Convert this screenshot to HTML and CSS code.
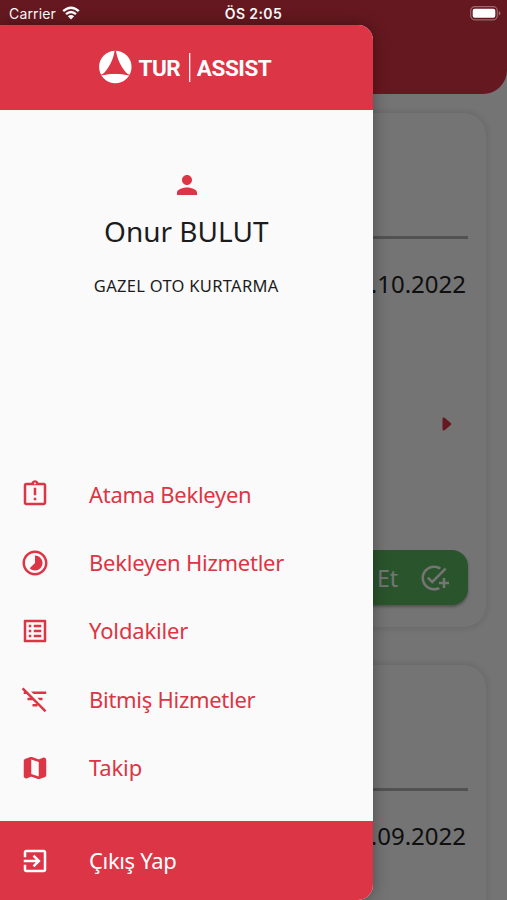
FILE: index.html
```html
<!DOCTYPE html>
<html lang="tr">
<head>
    <title>Tur Assist</title>
    <meta charset="UTF-8">
    <meta name="viewport" content="width=device-width, initial-scale=1">
    <link rel="stylesheet" href="styles.css">
</head>
<body>
<div class="screen">
    <!--Page behind the menu-->
    <div class="page">
	<div class="topbar"></div>
	<div class="card">
	    <div class="line"></div>
	    <div class="date">11.10.2022</div>
	    <div class="more">
		<svg width="10" height="14" viewBox="0 0 10 14"><path d="M.5 1.8Q.5.2 2 .5L3.2 1.2 8.8 6.1Q9.8 7 8.8 7.9L3.2 12.8 2 13.5Q.5 13.8.5 12.2z"/></svg>
	    </div>
	    <div class="accept">
		<span class="label">Kabul Et</span>
		<svg width="30" height="30" viewBox="0 0 24 24"><path d="M22 5.18 10.59 16.6l-4.24-4.24 1.41-1.41 2.83 2.83 10-10L22 5.18zM12 20c-4.41 0-8-3.59-8-8s3.59-8 8-8c1.57 0 3.04.46 4.28 1.25l1.45-1.45C16.1 2.67 14.13 2 12 2 6.48 2 2 6.48 2 12s4.48 10 10 10c1.73 0 3.36-.44 4.78-1.22l-1.5-1.5c-1 .46-2.11.72-3.28.72zm7-5h-3v2h3v3h2v-3h3v-2h-3v-3h-2v3z"/></svg>
	    </div>
	</div>
	<div class="card">
	    <div class="line"></div>
	    <div class="date">28.09.2022</div>
	</div>
    </div>
    <div class="shade"></div>

    <!--Status bar-->
    <div class="status">
	<div class="carrier">
	    <span>Carrier</span>
	    <svg width="18" height="14" viewBox="0 0 18 14"><path d="M1.2 5.2Q9-1.8 16.8 5.2M4 8.2Q9 3.8 14 8.2" fill="none" stroke="#fff" stroke-width="2.4"/><path d="M5.8 10.2Q9 7.6 12.2 10.2L9 13.6z" fill="#fff"/></svg>
	</div>
	<div class="clock">ÖS 2:05</div>
	<div class="battery">
	    <svg width="31" height="15" viewBox="0 0 31 15"><rect x=".7" y=".7" width="26.6" height="13.1" rx="4" fill="none" stroke="#fff" stroke-opacity=".35" stroke-width="1.2"/><rect x="2.7" y="2.7" width="22.6" height="9.1" rx="2" fill="#fff"/><path d="M28.8 5v4.5q1.6-.6 1.6-2.2T28.8 5z" fill="#fff" fill-opacity=".4"/></svg>
	</div>
    </div>

    <!--Menu-->
    <div class="drawer">
	<div class="brand">
	    <svg width="174" height="34" viewBox="0 0 174 34">
		<circle cx="16.3" cy="17" r="16.2" fill="#fff"/>
		<path d="M15.6.4C14.6 9 10 18.4 3.4 24.6L29.2 24.6C22.6 18.4 18 9 17 .4z" fill="#dc3545"/>
		<path d="M2.6 25.2Q16.3 21.6 30 25.2L28.6 27Q16.3 33 4 27z" fill="#fff"/>
		<path d="M2.2 25Q16.3 21.4 30.4 25" fill="none" stroke="#dc3545" stroke-width="1.2"/>
		<text x="39.6" y="25.5" textLength="42">TUR</text>
		<rect x="90" y="3" width="1.3" height="29" fill="#fff"/>
		<text x="97.8" y="25.5" textLength="75">ASSIST</text>
	    </svg>
	</div>
	<div class="user">
	    <svg width="30" height="30" viewBox="0 0 24 24"><path d="M12 12c2.21 0 4-1.79 4-4s-1.79-4-4-4-4 1.79-4 4 1.79 4 4 4zm0 2c-2.67 0-8 1.34-8 4v2h16v-2c0-2.66-5.33-4-8-4z"/></svg>
	    <div class="name">Onur BULUT</div>
	    <div class="company">GAZEL OTO KURTARMA</div>
	</div>
	<div class="menu">
	    <div class="item">
		<svg width="30" height="30" viewBox="0 0 24 24"><path d="M11 15h2v2h-2zm0-8h2v6h-2zm8-4h-4.18C14.4 1.84 13.3 1 12 1s-2.4.84-2.82 2H5c-1.1 0-2 .9-2 2v14c0 1.1.9 2 2 2h14c1.1 0 2-.9 2-2V5c0-1.1-.9-2-2-2zm-7-.25c.41 0 .75.34.75.75s-.34.75-.75.75-.75-.34-.75-.75.34-.75.75-.75zM19 19H5V5h14v14z" fill-rule="evenodd"/></svg>
		<span class="atama">Atama Bekleyen</span>
	    </div>
	    <div class="item">
		<svg width="30" height="30" viewBox="0 0 24 24"><path d="M16.24 7.76C15.07 6.59 13.54 6 12 6v6l-4.24 4.24c2.34 2.34 6.14 2.34 8.49 0 2.34-2.34 2.34-6.14-.01-8.48zM12 2C6.48 2 2 6.48 2 12s4.48 10 10 10 10-4.48 10-10S17.52 2 12 2zm0 18c-4.42 0-8-3.58-8-8s3.58-8 8-8 8 3.58 8 8-3.58 8-8 8z"/></svg>
		<span class="bekleyen">Bekleyen Hizmetler</span>
	    </div>
	    <div class="item">
		<svg width="30" height="30" viewBox="0 0 24 24"><path d="M19 5v14H5V5h14m1.1-2H3.9c-.5 0-.9.4-.9.9v16.2c0 .4.4.9.9.9h16.2c.4 0 .9-.5.9-.9V3.9c0-.5-.5-.9-.9-.9zM11 7h6v2h-6V7zm0 4h6v2h-6v-2zm0 4h6v2h-6zM7 7h2v2H7zm0 4h2v2H7zm0 4h2v2H7z"/></svg>
		<span class="yolda">Yoldakiler</span>
	    </div>
	    <div class="item">
		<svg width="30" height="30" viewBox="0 0 24 24"><path d="M10.83 8H21V6H8.83l2 2zm5 5H18v-2h-4.17l2 2zM14 16.83V18h-4v-2h3.17l-3-3H6v-2h2.17l-3-3H3V6h.17L1.39 4.22 2.8 2.81l18.38 18.38-1.41 1.41L14 16.83z"/></svg>
		<span class="bitmis">Bitmiş Hizmetler</span>
	    </div>
	    <div class="item">
		<svg width="30" height="30" viewBox="0 0 24 24"><path d="M14.65 4.98l-5-1.75c-.42-.15-.88-.15-1.3-.01L4.36 4.56C3.55 4.84 3 5.6 3 6.46v11.85c0 1.41 1.41 2.37 2.72 1.86l2.93-1.14c.22-.09.47-.09.69-.01l5 1.75c.42.15.88.15 1.3.01l3.99-1.34c.81-.27 1.36-1.04 1.36-1.9V5.69c0-1.41-1.41-2.37-2.72-1.86l-2.93 1.14c-.22.08-.46.09-.69.01zM15 18.89l-6-2.11V5.11l6 2.11v11.67z"/></svg>
		<span class="takip">Takip</span>
	    </div>
	</div>
	<div class="logout">
	    <svg width="30" height="30" viewBox="0 0 24 24"><path d="M10.09 15.59L11.5 17l5-5-5-5-1.41 1.41L12.67 11H3v2h9.67l-2.58 2.59zM19 3H5c-1.1 0-2 .9-2 2v4h2V5h14v14H5v-4H3v4c0 1.1.9 2 2 2h14c1.1 0 2-.9 2-2V5c0-1.1-.9-2-2-2z"/></svg>
	    <span class="cikis">Çıkış Yap</span>
	</div>
    </div>
</div>
</body>
</html>
```

FILE: styles.css
```css
body{
    margin:0;
    padding:0;
    font-family: "Noto Sans", "Open Sans", sans-serif;
}
.screen{
    position: relative;
    width: 507px;
    height: 900px;
    overflow: hidden;
    background: #fff;
}
svg{
    display: block;
    flex: none;
}

/* page */
.page{
    height: 900px;
    overflow: hidden;
    background: #fdfdfd;
}
.topbar{
    height: 94px;
    background: #dc3545;
    border-radius: 0 0 24px 24px;
}
.card{
    box-sizing: border-box;
    height: 514px;
    margin: 19px 21px 38px;
    padding: 123px 18px 0;
    border-radius: 22px;
    background: #fdfdfd;
    box-shadow: 0 0 6px 2px rgba(0,0,0,.1);
}
.line{
    height: 3px;
    background: #b4b4b4;
}
.date{
    margin-top: 28px;
    padding-right: 2px;
    text-align: right;
    font-size: 24px;
    line-height: 34px;
    color: #222;
}
.more{
    display: flex;
    justify-content: flex-end;
    padding: 116px 16px 119px 0;
    fill: #dc3545;
}
.accept{
    display: flex;
    justify-content: flex-end;
    align-items: center;
    gap: 21px;
    height: 55px;
    padding-right: 19px;
    border-radius: 16px;
    background: #5cb860;
    color: #fff;
    fill: #fff;
    font-size: 23px;
    box-shadow: 0 2px 3px rgba(0,0,0,.3);
}
.shade{
    position: absolute;
    top: 0;
    left: 0;
    width: 100%;
    height: 100%;
    background: rgba(0,0,0,.54);
}

/* status bar */
.status{
    position: absolute;
    top: 0;
    left: 0;
    width: 100%;
    height: 26px;
    display: grid;
    grid-template-columns: 1fr auto 1fr;
    align-items: center;
    font-family: Inter, sans-serif;
    font-size: 14px;
    color: #fff;
}
.carrier{
    display: flex;
    align-items: center;
    gap: 6px;
    padding-left: 9px;
    letter-spacing: .15px;
}
.clock{
    font-weight: 600;
    letter-spacing: .4px;
}
.battery{
    display: flex;
    justify-content: flex-end;
    padding-right: 6px;
}

/* menu */
.drawer{
    position: absolute;
    top: 25px;
    left: 0;
    width: 372.5px;
    height: 875px;
    display: flex;
    flex-direction: column;
    overflow: hidden;
    border-radius: 0 15px 15px 0;
    background: #fafafa;
    box-shadow: 0 0 16px rgba(0,0,0,.35);
}
.brand{
    display: flex;
    justify-content: center;
    height: 60px;
    padding-top: 25px;
    padding-right: 1px;
    background: #dc3545;
}
.brand text{
    font-family: Roboto, sans-serif;
    font-weight: 700;
    font-size: 22.5px;
    fill: #fff;
}
.user{
    display: flex;
    flex-direction: column;
    align-items: center;
    height: 290px;
    padding-top: 60px;
    color: #1c1c1c;
}
.user svg{
    margin-left: 1px;
    fill: #dc3545;
}
.name{
    margin-top: 9px;
    font-size: 28px;
    line-height: 44px;
}
.company{
    margin-top: 21px;
    font-size: 16.5px;
    line-height: 24px;
    letter-spacing: .3px;
}
.menu{
    flex: 1;
    color: #dc3545;
    fill: #dc3545;
}
.item{
    display: flex;
    align-items: center;
    gap: 39px;
    height: 68.4px;
    padding-left: 20px;
    font-size: 22px;
}
.item span, .logout span{
    padding-bottom: 1px;
}
.atama, .bitmis{
    letter-spacing: -.28px;
}
.bekleyen{
    letter-spacing: -.24px;
}
.yolda, .takip{
    letter-spacing: -.15px;
}
.logout{
    display: flex;
    align-items: center;
    gap: 39px;
    height: 79px;
    padding-left: 20px;
    font-size: 22px;
    background: #dc3545;
    color: #fff;
    fill: #fff;
}
.cikis{
    letter-spacing: -.35px;
}
```
